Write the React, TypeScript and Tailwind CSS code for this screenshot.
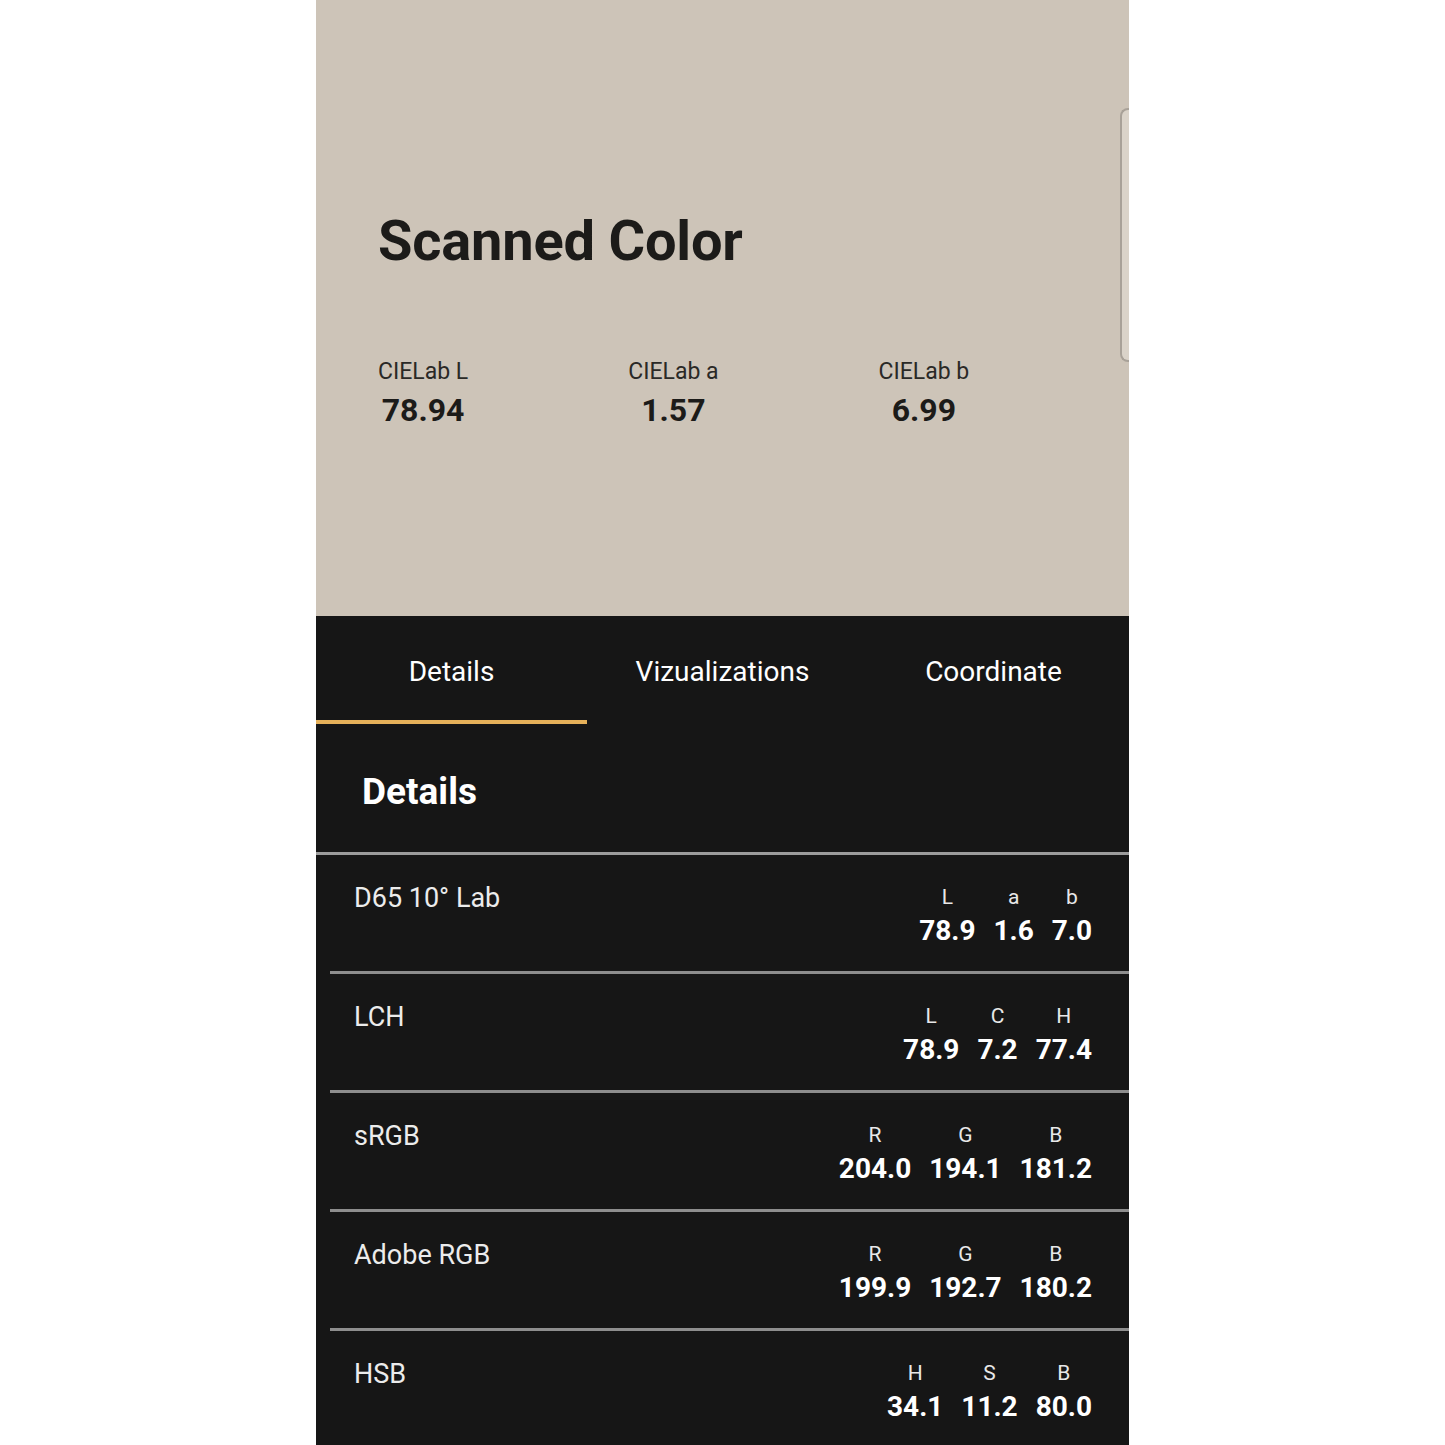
const font = { fontFamily: 'Roboto, "Noto Sans", sans-serif' };

const stats = [
  { label: 'CIELab L', value: '78.94' },
  { label: 'CIELab a', value: '1.57' },
  { label: 'CIELab b', value: '6.99' },
];

const tabs = ['Details', 'Vizualizations', 'Coordinate'];

const rows = [
  { name: 'D65 10° Lab', cols: [['L', '78.9'], ['a', '1.6'], ['b', '7.0']] },
  { name: 'LCH', cols: [['L', '78.9'], ['C', '7.2'], ['H', '77.4']] },
  { name: 'sRGB', cols: [['R', '204.0'], ['G', '194.1'], ['B', '181.2']] },
  { name: 'Adobe RGB', cols: [['R', '199.9'], ['G', '192.7'], ['B', '180.2']] },
  { name: 'HSB', cols: [['H', '34.1'], ['S', '11.2'], ['B', '80.0']] },
];

export default function App() {
  return (
    <div className="w-[1445px] h-[1445px] bg-white flex justify-center" style={font}>
      <div className="w-[813px] h-[1445px] overflow-hidden flex flex-col bg-[#161616]">
        {/* Scanned swatch */}
        <section className="relative h-[616px] shrink-0 bg-[#cdc4b8] pl-[62px] pt-[213px] text-[#1c1b19]">
          <h1 className="text-[56px] leading-none font-bold tracking-[-0.2px]">Scanned Color</h1>
          <div className="mt-[91px] flex gap-[160px]">
            {stats.map(s => (
              <div key={s.label} className="flex flex-col items-center">
                <span className="text-[23px] leading-none text-[#2a2926]">{s.label}</span>
                <span className="mt-[11px] text-[32px] leading-none font-bold">{s.value}</span>
              </div>
            ))}
          </div>
          <div className="absolute right-0 top-[108px] w-[9px] h-[254px] rounded-l-[8px] border-l-2 border-y-2 border-[#a8a198] bg-[#dad3c9]" />
        </section>

        {/* Tabs */}
        <nav className="grid grid-cols-3 h-[108px] shrink-0">
          {tabs.map((t, i) => (
            <div key={t} className="relative flex items-center justify-center pt-[4px]">
              <span className="text-[28px] leading-none text-white">{t}</span>
              {i === 0 && <div className="absolute left-0 right-0 bottom-0 h-[4px] bg-[#e6b15a]" />}
            </div>
          ))}
        </nav>

        <div className="shrink-0 pl-[46px] pt-[49px] pb-[42px]">
          <h2 className="text-[37px] leading-none font-bold text-white">Details</h2>
        </div>

        <div className="shrink-0 h-[3px] bg-[#9c9c9c]" />

        <div className="shrink-0 ml-[14px]">
          {rows.map(r => (
            <div key={r.name} className="h-[119px] border-b-[3px] border-[#8e8e8e] flex justify-between pl-[24px] pr-[37px] pt-[30px]">
              <span className="text-[27px] leading-none text-[#ececec]">{r.name}</span>
              <div className="flex gap-[18px] pt-[2px]">
                {r.cols.map(([k, v]) => (
                  <div key={k + v} className="flex flex-col items-center">
                    <span className="text-[21px] leading-none text-[#e8e8e8]">{k}</span>
                    <span className="mt-[9px] text-[28px] leading-none font-bold text-white">{v}</span>
                  </div>
                ))}
              </div>
            </div>
          ))}
        </div>
      </div>
    </div>
  );
}
